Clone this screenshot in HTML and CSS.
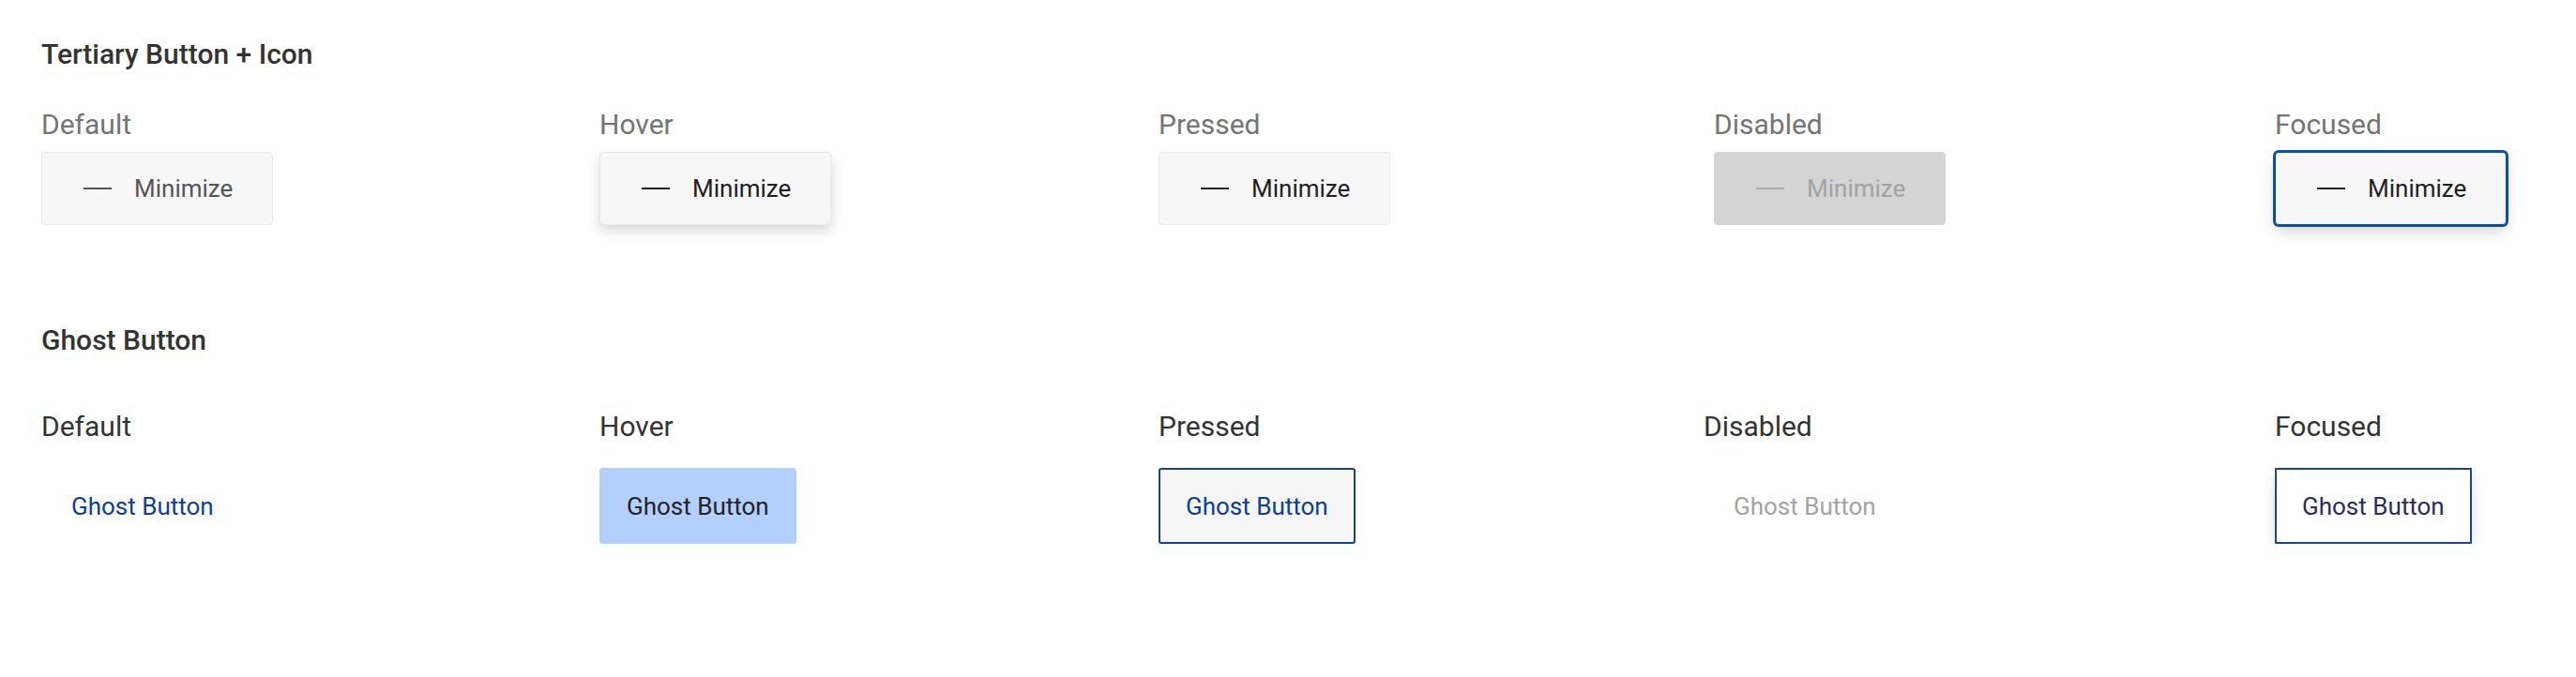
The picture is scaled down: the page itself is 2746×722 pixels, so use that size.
FILE: index.html
```html
<!DOCTYPE html>
<html lang="en">
<head>
<meta charset="utf-8">
<title>Buttons</title>
<link rel="stylesheet" href="styles.css">
</head>
<body>
<main class="page">
  <section class="group group--tertiary">
    <h2 class="group-title">Tertiary Button + Icon</h2>
    <div class="states">
      <div class="state">
        <div class="state-label">Default</div>
        <button class="btn-tertiary"><span class="dash"></span><span>Minimize</span></button>
      </div>
      <div class="state">
        <div class="state-label">Hover</div>
        <button class="btn-tertiary is-hover"><span class="dash"></span><span>Minimize</span></button>
      </div>
      <div class="state">
        <div class="state-label">Pressed</div>
        <button class="btn-tertiary is-pressed"><span class="dash"></span><span>Minimize</span></button>
      </div>
      <div class="state">
        <div class="state-label">Disabled</div>
        <button class="btn-tertiary is-disabled"><span class="dash"></span><span>Minimize</span></button>
      </div>
      <div class="state">
        <div class="state-label">Focused</div>
        <button class="btn-tertiary is-focused"><span class="dash"></span><span>Minimize</span></button>
      </div>
    </div>
  </section>

  <section class="group group--ghost">
    <h2 class="group-title">Ghost Button</h2>
    <div class="states">
      <div class="state">
        <div class="state-label">Default</div>
        <button class="btn-ghost">Ghost Button</button>
      </div>
      <div class="state">
        <div class="state-label">Hover</div>
        <button class="btn-ghost is-hover">Ghost Button</button>
      </div>
      <div class="state">
        <div class="state-label">Pressed</div>
        <button class="btn-ghost is-pressed">Ghost Button</button>
      </div>
      <div class="state state--shift">
        <div class="state-label">Disabled</div>
        <button class="btn-ghost is-disabled">Ghost Button</button>
      </div>
      <div class="state">
        <div class="state-label">Focused</div>
        <button class="btn-ghost is-focused">Ghost Button</button>
      </div>
    </div>
  </section>
</main>
</body>
</html>
```

FILE: styles.css
```css
* { box-sizing: border-box; }

html, body {
  margin: 0;
  background: #ffffff;
}

body {
  font-family: Roboto, "Liberation Sans", sans-serif;
  color: #333333;
}

.page {
  padding: 40px 0 0 44px;
}

.group-title {
  margin: 0;
  font-size: 30px;
  line-height: 36px;
  font-weight: 500;
  color: #333333;
}

.group--ghost {
  margin-top: 105px;
}

.states {
  display: grid;
  grid-template-columns: 595px 596px 592px 598px 300px;
  margin-top: 39px;
}

.group--ghost .states {
  margin-top: 56px;
}

.state {
  display: flex;
  flex-direction: column;
  align-items: flex-start;
  gap: 11px;
}

.group--ghost .state {
  gap: 26px;
}

.state--shift {
  margin-left: -11px;
}

.state-label {
  font-size: 30px;
  line-height: 36px;
  font-weight: 400;
  color: #747474;
}

.group--ghost .state-label {
  color: #333333;
}

/* Tertiary button */
.btn-tertiary {
  display: inline-flex;
  align-items: center;
  gap: 24px;
  width: 247px;
  height: 78px;
  padding: 0 0 0 44px;
  border: 1px solid #e7e7e7;
  border-radius: 4px;
  background: #f7f7f7;
  font-family: Roboto, "Liberation Sans", sans-serif;
  font-size: 26px;
  line-height: 32px;
  color: #555555;
  cursor: pointer;
}

.dash {
  display: block;
  width: 30px;
  height: 2px;
  background: #555555;
}

.btn-tertiary.is-hover {
  color: #1f1f1f;
  box-shadow: 0 6px 14px rgba(0, 0, 0, 0.16);
}

.btn-tertiary.is-hover .dash,
.btn-tertiary.is-pressed .dash,
.btn-tertiary.is-focused .dash {
  background: #222222;
}

.btn-tertiary.is-pressed {
  color: #1f1f1f;
}

.btn-tertiary.is-disabled {
  background: #d4d4d4;
  border-color: #d4d4d4;
  color: #a2a2a2;
}

.btn-tertiary.is-disabled .dash {
  background: #ababab;
}

.btn-tertiary.is-focused {
  color: #1f1f1f;
  border-color: #0650b0;
  box-shadow: 0 0 0 2px #0650b0, 0 7px 16px rgba(0, 0, 0, 0.16);
}

/* Ghost button */
.btn-ghost {
  display: inline-flex;
  align-items: center;
  height: 81px;
  padding: 0 28px 0 31px;
  border: 1px solid transparent;
  border-radius: 3px;
  background: transparent;
  font-family: Roboto, "Liberation Sans", sans-serif;
  font-size: 26px;
  line-height: 32px;
  color: #0b3d9e;
  cursor: pointer;
}

.btn-ghost.is-hover {
  padding: 0 28px;
  background: #b3d0fd;
  border-color: #b3d0fd;
  color: #222222;
}

.btn-ghost.is-pressed {
  padding: 0 27px;
  border: 2px solid #1441a0;
  background: #f6f6f7;
  color: #0b3d9e;
}

.btn-ghost.is-disabled {
  color: #a3a3a3;
  cursor: default;
}

.btn-ghost.is-focused {
  padding: 0 27px;
  border: 2px solid #1a449f;
  border-radius: 1px;
  background: #ffffff;
  color: #2d2b5e;
  box-shadow: 0 6px 14px rgba(0, 0, 0, 0.14);
}
```
